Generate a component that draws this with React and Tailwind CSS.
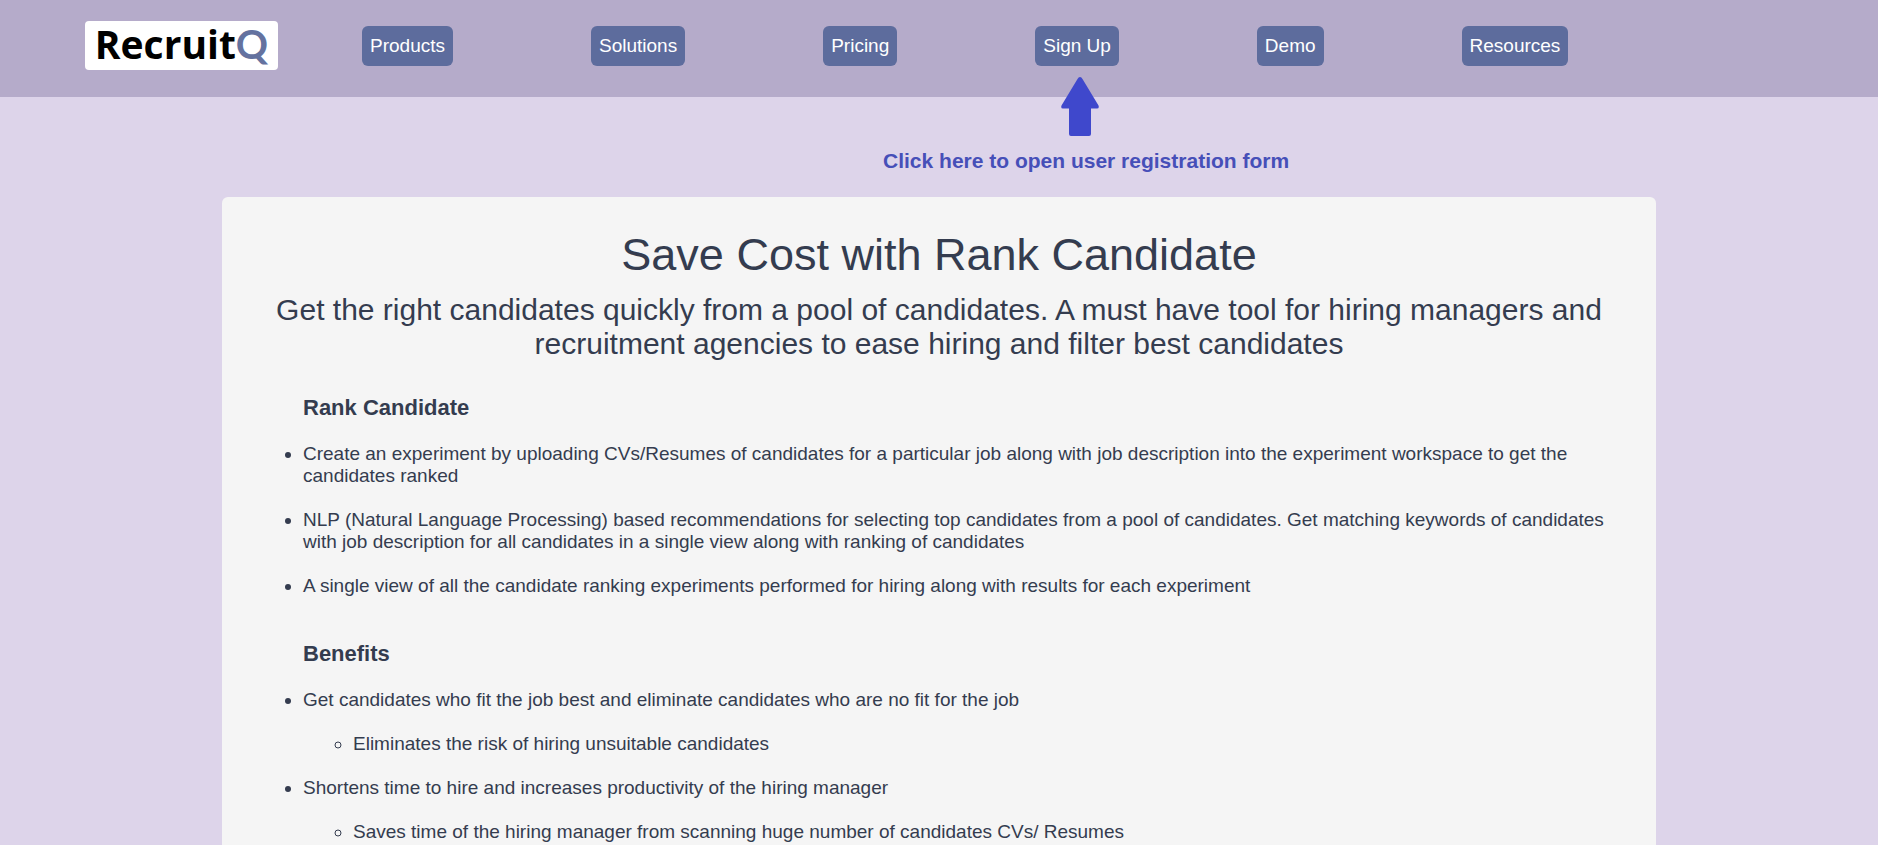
import React from 'react';

const navItems = ['Products', 'Solutions', 'Pricing', 'Sign Up', 'Demo', 'Resources'];

const sections = [
  {
    title: 'Rank Candidate',
    items: [
      { text: 'Create an experiment by uploading CVs/Resumes of candidates for a particular job along with job description into the experiment workspace to get the candidates ranked' },
      { text: 'NLP (Natural Language Processing) based recommendations for selecting top candidates from a pool of candidates. Get matching keywords of candidates with job description for all candidates in a single view along with ranking of candidates' },
      { text: 'A single view of all the candidate ranking experiments performed for hiring along with results for each experiment' },
    ],
  },
  {
    title: 'Benefits',
    items: [
      {
        text: 'Get candidates who fit the job best and eliminate candidates who are no fit for the job',
        sub: 'Eliminates the risk of hiring unsuitable candidates',
      },
      {
        text: 'Shortens time to hire and increases productivity of the hiring manager',
        sub: 'Saves time of the hiring manager from scanning huge number of candidates CVs/ Resumes',
      },
    ],
  },
];

/**
 * Arrow and caption that point at the Sign Up link.
 */
const SignUpHint = () => (
  <div className="absolute top-[51px] left-1/2 -translate-x-[194px] flex flex-col items-center pointer-events-none">
    <svg className="mr-3" width="38" height="59" viewBox="0 0 38 59" fill="#3f48cc" aria-hidden="true">
      <path d="M19 0 Q20.5 0 21.5 2 L37.5 28.5 Q38.5 31.5 36 31.5 H30 V57 Q30 59 28 59 H10 Q8 59 8 57 V31.5 H2 Q-0.5 31.5 0.5 28.5 L16.5 2 Q17.5 0 19 0 Z" />
    </svg>
    <p className="mt-[13px] text-[21px] leading-6 font-bold text-[#464fb8] whitespace-nowrap">
      Click here to open user registration form
    </p>
  </div>
);

const Header = () => (
  <header className="flex items-center bg-[#b5abca] pt-[21px] pb-[27px] pl-[85px]">
    <a
      href="#"
      className="flex h-[49px] w-[193px] items-baseline justify-center rounded-[4px] bg-white font-['Open_Sans',sans-serif] text-[39px] leading-[46px] text-black"
    >
      <span className="font-bold">Recruit</span>
      <span className="font-['Lato',sans-serif] text-[40px] font-bold leading-none text-[#64729f]">Q</span>
    </a>
    <nav className="ml-[84px] flex gap-[138px]">
      {navItems.map((item) => (
        <div key={item} className="relative">
          <a href="#" className="block rounded-[6px] bg-[#5d6c9d] px-2 text-[19px] leading-10 text-white whitespace-nowrap">
            {item}
          </a>
          {item === 'Sign Up' && <SignUpHint />}
        </div>
      ))}
    </nav>
  </header>
);

const Section = ({ title, items }) => (
  <section className="pl-[40px]">
    <h3 className="text-[22px] leading-[26px] font-bold">{title}</h3>
    <ul className="mt-[22px] flex list-disc flex-col gap-[22px] text-[19px] leading-[22px]">
      {items.map(({ text, sub }) => (
        <li key={text}>
          {text}
          {sub && (
            <ul className="mt-[22px] list-[circle] pl-[50px]">
              <li>{sub}</li>
            </ul>
          )}
        </li>
      ))}
    </ul>
  </section>
);

const App = () => {
  return (
    <div className="flex min-h-screen flex-col bg-[#ddd4ea] font-['Liberation_Sans',Arial,sans-serif] text-[#343c4f]">
      <Header />
      <main className="mx-auto mt-[100px] w-full max-w-[1434px] flex-1 rounded-t-[6px] bg-[#f5f5f5] px-[41px] pt-8">
        <h1 className="text-center text-[45px] leading-[52px]">Save Cost with Rank Candidate</h1>
        <h2 className="mt-3 text-center text-[30px] leading-[34px]">
          Get the right candidates quickly from a pool of candidates. A must have tool for hiring managers and
          recruitment agencies to ease hiring and filter best candidates
        </h2>
        <div className="mt-[34px] flex flex-col gap-11">
          {sections.map((section) => (
            <Section key={section.title} {...section} />
          ))}
        </div>
      </main>
    </div>
  );
};

export default App;
